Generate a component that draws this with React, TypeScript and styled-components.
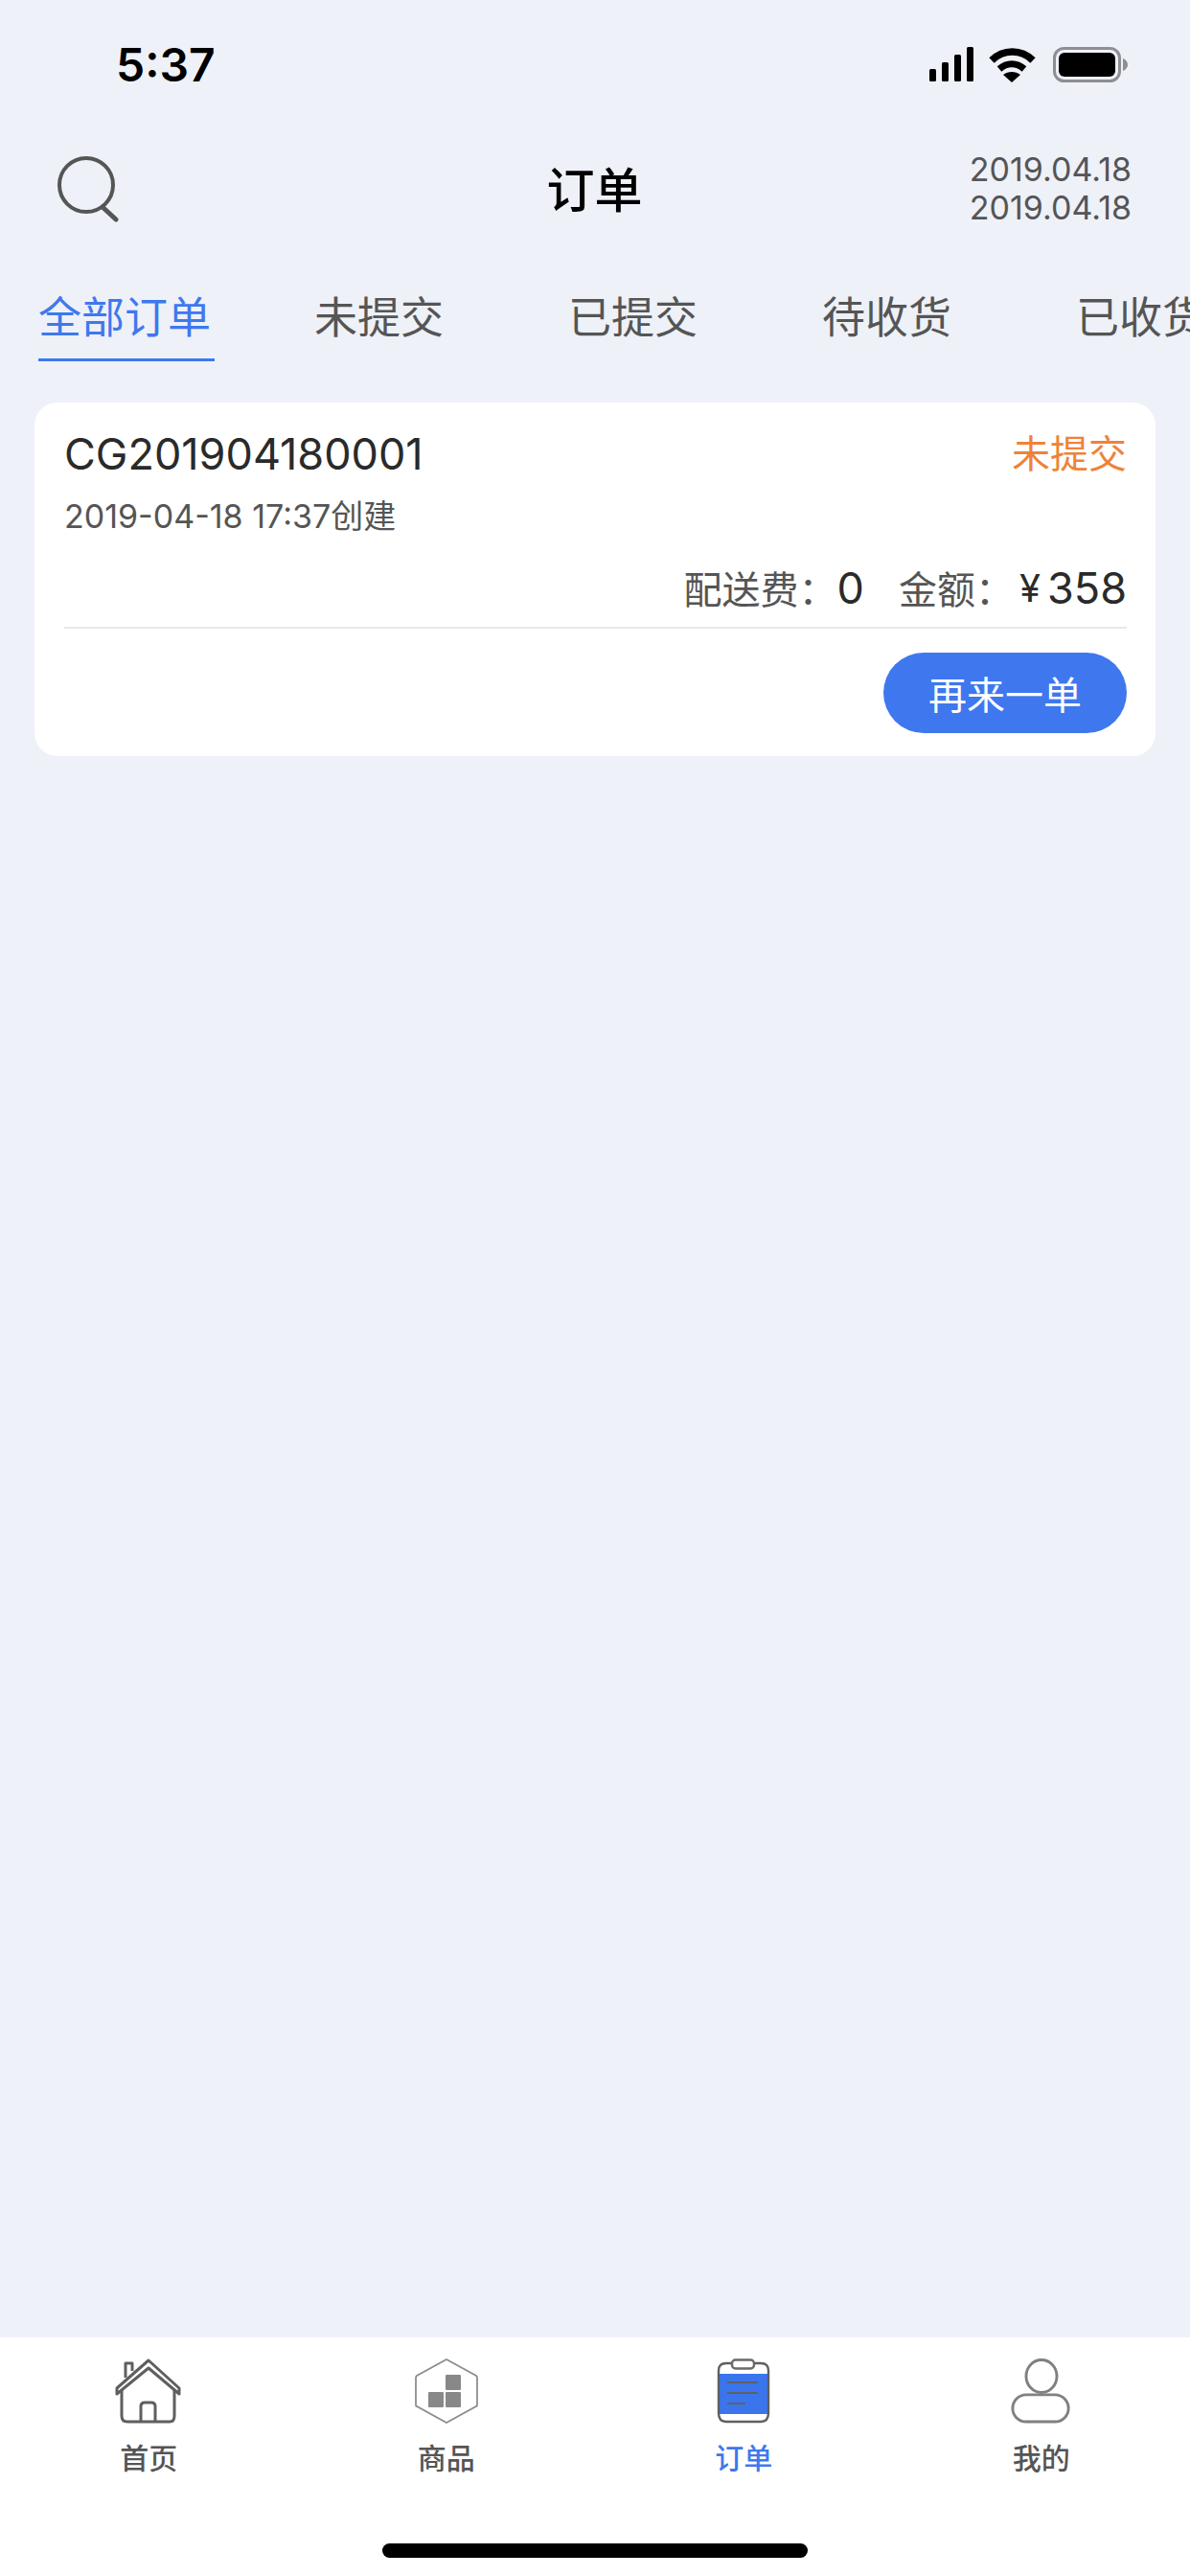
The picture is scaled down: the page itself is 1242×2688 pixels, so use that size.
import React from 'react';
import styled, { createGlobalStyle } from 'styled-components';

const GlobalStyle = createGlobalStyle`
  html, body {
    margin: 0;
    padding: 0;
    background: #eef1f8;
    font-family: Inter, "Noto Sans CJK SC", sans-serif;
  }
  * { box-sizing: border-box; }
`;

const Page = styled.div`
  width: 1242px;
  height: 2688px;
  display: flex;
  flex-direction: column;
  overflow: hidden;
`;
const StatusBar = styled.div`
  height: 134px;
  padding: 46px 65px 0 121px;
  display: flex;
  justify-content: space-between;
  align-items: flex-start;
`;
const Time = styled.span`
  font-family: Inter, sans-serif;
  font-size: 48px;
  line-height: 44px;
  font-weight: 600;
  color: #000;
`;
const NavHeader = styled.div`
  height: 124px;
  padding: 23px 61px 0 60px;
  display: grid;
  grid-template-columns: 1fr auto 1fr;
  align-items: flex-start;
`;
const SearchButton = styled.div`
  margin-top: 5px;
`;
const Title = styled.h1`
  margin: 10px 0 0;
  font-size: 50px;
  line-height: 64px;
  font-weight: 500;
  color: #000;
`;
const Dates = styled.div`
  justify-self: end;
  font-size: 34px;
  line-height: 40px;
  color: #555;
  text-align: right;
`;
const Tabs = styled.div`
  display: flex;
  height: 128px;
  padding: 41px 0 0 40px;
  white-space: nowrap;
`;
const Tab = styled.div<{ $active?: boolean }>`
  flex: none;
  height: 78px;
  margin-right: ${(p) => (p.$active ? 104 : 130)}px;
  padding-right: ${(p) => (p.$active ? 4 : 0)}px;
  font-size: 45px;
  line-height: 66px;
  color: ${(p) => (p.$active ? '#3f78ee' : '#555')};
  border-bottom: ${(p) => (p.$active ? '3px solid #3f78ee' : 'none')};
`;
const Content = styled.div`
  flex: 1;
  padding: 34px 36px 0;
`;
const Card = styled.div`
  height: 369px;
  padding: 28px 30px 0 31px;
  background: #fff;
  border-radius: 24px;
`;
const TopRow = styled.div`
  display: flex;
  justify-content: space-between;
  align-items: center;
  height: 52px;
`;
const OrderNo = styled.span`
  font-size: 45px;
  line-height: 52px;
  color: #2a2a2a;
`;
const OrderStatus = styled.span`
  font-size: 40px;
  line-height: 52px;
  color: #ee8338;
`;
const Created = styled.div`
  margin-top: 17px;
  font-size: 34px;
  line-height: 44px;
  color: #555;
`;
const Amounts = styled.div`
  display: flex;
  justify-content: flex-end;
  align-items: center;
  height: 60px;
  margin-top: 22px;
`;
const AmountLabel = styled.span<{ $gap?: number }>`
  font-size: 40px;
  color: #555;
  margin-left: ${(p) => p.$gap ?? 0}px;
`;
const AmountValue = styled.span`
  font-size: 45px;
  color: #2a2a2a;
`;
const Currency = styled.span`
  font-size: 40px;
  color: #2a2a2a;
  margin: 0 7px 0 6px;
`;
const Divider = styled.div`
  height: 2px;
  margin-top: 11px;
  background: #e9e9ec;
`;
const Actions = styled.div`
  display: flex;
  justify-content: flex-end;
  margin-top: 25px;
`;
const AgainButton = styled.button`
  width: 254px;
  height: 84px;
  border: none;
  border-radius: 42px;
  background: #3f78ee;
  color: #fff;
  font-family: inherit;
  font-size: 40px;
  padding: 0;
`;
const TabBar = styled.div`
  height: 249px;
  padding-top: 22px;
  background: #fff;
  display: flex;
  flex-direction: column;
`;
const TabBarItems = styled.div`
  display: grid;
  grid-template-columns: repeat(4, 1fr);
`;
const TabBarItem = styled.div<{ $active?: boolean }>`
  display: flex;
  flex-direction: column;
  align-items: center;
  font-size: 30px;
  line-height: 40px;
  font-weight: 500;
  color: ${(p) => (p.$active ? '#3f78ee' : '#555')};
`;
const TabIcon = styled.svg`
  display: block;
  margin-bottom: 16px;
`;
const HomeIndicator = styled.div`
  width: 444px;
  height: 15px;
  margin: 69px auto 0;
  border-radius: 8px;
  background: #000;
`;
const Icons = styled.div`
  display: flex;
  align-items: flex-start;
  padding-top: 3px;
`;

const StatusIcons = () => (
  <Icons>
    <svg width="207" height="38" viewBox="970 49 207 38">
      <rect x="970" y="72" width="7" height="13" rx="1.5" fill="#000" />
      <rect x="983" y="65" width="7" height="20" rx="1.5" fill="#000" />
      <rect x="996" y="57" width="7" height="28" rx="1.5" fill="#000" />
      <rect x="1009" y="49" width="7" height="36" rx="1.5" fill="#000" />
      <path d="M1035 63 C1047 51 1066 51 1078 63" fill="none" stroke="#000" strokeWidth="7.5" />
      <path d="M1043 72 C1051 65 1061 65 1069 72" fill="none" stroke="#000" strokeWidth="7" />
      <path d="M1047 78 C1052 74 1060 74 1065 78 L1056 86 Z" fill="#000" />
      <rect x="1100.5" y="50.5" width="68" height="34" rx="10" fill="none" stroke="#8e8e93" strokeWidth="3" />
      <rect x="1105" y="55" width="59" height="25" rx="6" fill="#000" />
      <path d="M1172 61 C1175 62 1177 65 1177 67.5 C1177 70 1175 73 1172 74 Z" fill="#8e8e93" />
    </svg>
  </Icons>
);

const SearchIcon = () => (
  <svg width="66" height="70" viewBox="60 162 66 70">
    <circle cx="90" cy="193" r="28" fill="none" stroke="#555" strokeWidth="4" />
    <path d="M107 216 L121 229" fill="none" stroke="#555" strokeWidth="5" strokeLinecap="round" />
  </svg>
);

const HouseIcon = () => (
  <TabIcon width="70" height="68" viewBox="0 0 70 68">
    <g fill="none" stroke="#5f5f5f" strokeWidth="3" strokeLinejoin="round">
      <path d="M2 37 L2 31 L35 2 L67 31 L67 37 L35 10 Z" />
      <path d="M11 20 L11 5 L18 5 L18 13" />
      <path d="M7 33 L7 60 Q7 66 13 66 L57 66 Q62 66 62 60 L62 33" />
      <path d="M27 66 L27 50 Q27 46 31 46 L38 46 Q42 46 42 50 L42 66" />
    </g>
  </TabIcon>
);

const GoodsIcon = () => (
  <TabIcon width="66" height="68" viewBox="0 0 66 68">
    <path d="M33 1 L64 18 Q65 19 65 20 L65 48 Q65 50 64 50 L33 67 L2 50 Q1 50 1 48 L1 20 Q1 19 2 18 Z" fill="#fff" stroke="#8e8e8e" strokeWidth="1.8" />
    <rect x="32" y="17" width="16" height="16" rx="1" fill="#888" />
    <rect x="14" y="35" width="16" height="16" rx="1" fill="#888" />
    <rect x="32" y="35" width="16" height="16" rx="1" fill="#888" />
  </TabIcon>
);

const OrderIcon = () => (
  <TabIcon width="56" height="68" viewBox="0 0 56 68">
    <rect x="3" y="16" width="50" height="42" fill="#3a75ec" />
    <path d="M16 5 L10 5 Q2 5 2 13 L2 57 Q2 66 10 66 L46 66 Q54 66 54 57 L54 13 Q54 5 46 5 L39 5" fill="none" stroke="#5f5f5f" strokeWidth="2.4" />
    <rect x="16" y="1.5" width="23" height="9" rx="3.5" fill="#fff" stroke="#6a6a6a" strokeWidth="2.4" />
    <path d="M11 25 L43 25 M11 36 L43 36 M11 47 L30 47" stroke="#5f5f6a" strokeWidth="2.2" />
  </TabIcon>
);

const MineIcon = () => (
  <TabIcon width="66" height="68" viewBox="0 0 66 70">
    <ellipse cx="33" cy="19" rx="16.5" ry="17.5" fill="none" stroke="#808080" strokeWidth="3" />
    <rect x="2" y="39" width="60" height="29" rx="14.5" fill="none" stroke="#808080" strokeWidth="3" />
  </TabIcon>
);

const App = () => {
  return (
    <Page>
      <GlobalStyle />
      <StatusBar>
        <Time>5:37</Time>
        <StatusIcons />
      </StatusBar>
      <NavHeader>
        <SearchButton>
          <SearchIcon />
        </SearchButton>
        <Title>订单</Title>
        <Dates>
          2019.04.18
          <br />
          2019.04.18
        </Dates>
      </NavHeader>
      <Tabs>
        <Tab $active>全部订单</Tab>
        <Tab>未提交</Tab>
        <Tab>已提交</Tab>
        <Tab>待收货</Tab>
        <Tab>已收货</Tab>
      </Tabs>
      <Content>
        <Card>
          <TopRow>
            <OrderNo>CG201904180001</OrderNo>
            <OrderStatus>未提交</OrderStatus>
          </TopRow>
          <Created>2019-04-18 17:37创建</Created>
          <Amounts>
            <AmountLabel>配送费：</AmountLabel>
            <AmountValue>0</AmountValue>
            <AmountLabel $gap={36}>金额：</AmountLabel>
            <Currency>¥</Currency>
            <AmountValue>358</AmountValue>
          </Amounts>
          <Divider />
          <Actions>
            <AgainButton>再来一单</AgainButton>
          </Actions>
        </Card>
      </Content>
      <TabBar>
        <TabBarItems>
          <TabBarItem>
            <HouseIcon />
            首页
          </TabBarItem>
          <TabBarItem>
            <GoodsIcon />
            商品
          </TabBarItem>
          <TabBarItem $active>
            <OrderIcon />
            订单
          </TabBarItem>
          <TabBarItem>
            <MineIcon />
            我的
          </TabBarItem>
        </TabBarItems>
        <HomeIndicator />
      </TabBar>
    </Page>
  );
};

export default App;
